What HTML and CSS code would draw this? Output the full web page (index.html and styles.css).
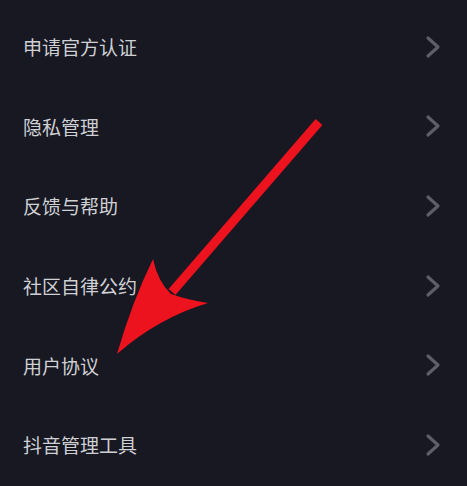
FILE: index.html
```html
<!DOCTYPE html>
<html lang="zh-CN">
<head>
<meta charset="utf-8">
<link rel="stylesheet" href="styles.css">
</head>
<body>
<div class="page">
  <ul class="menu">
    <li class="row"><span class="label">申请官方认证</span><svg class="chev" viewBox="0 0 16 24"><path d="M3 3 L13 12 L3 21"/></svg></li>
    <li class="row"><span class="label">隐私管理</span><svg class="chev" viewBox="0 0 16 24"><path d="M3 3 L13 12 L3 21"/></svg></li>
    <li class="row"><span class="label">反馈与帮助</span><svg class="chev" viewBox="0 0 16 24"><path d="M3 3 L13 12 L3 21"/></svg></li>
    <li class="row"><span class="label">社区自律公约</span><svg class="chev" viewBox="0 0 16 24"><path d="M3 3 L13 12 L3 21"/></svg></li>
    <li class="row"><span class="label">用户协议</span><svg class="chev" viewBox="0 0 16 24"><path d="M3 3 L13 12 L3 21"/></svg></li>
    <li class="row"><span class="label">抖音管理工具</span><svg class="chev" viewBox="0 0 16 24"><path d="M3 3 L13 12 L3 21"/></svg></li>
  </ul>
  <svg class="arrow" viewBox="0 0 467 486" width="467" height="486">
    <line x1="319" y1="122" x2="172" y2="292" stroke="#ec121e" stroke-width="9"/>
    <path d="M117 354 Q132 302 153 259 Q158 282 171 294 Q188 300 208 303 Q158 318 117 354 Z" fill="#ec121e"/>
  </svg>
</div>
</body>
</html>
```
FILE: styles.css
```css
html, body {
  margin: 0;
  padding: 0;
  background: #171822;
}
.page {
  position: relative;
  width: 467px;
  height: 486px;
  overflow: hidden;
  background: #171822;
  font-family: "Noto Sans CJK SC", "Noto Sans", sans-serif;
}
.menu {
  list-style: none;
  margin: 0;
  padding: 7px 0 0 0;
}
.row {
  height: 79.6px;
  display: flex;
  align-items: center;
  justify-content: space-between;
  padding: 0 26px 0 23px;
  box-sizing: border-box;
}
.label {
  color: #cfd0d4;
  font-size: 19px;
  letter-spacing: 0;
}
.chev {
  width: 16px;
  height: 24px;
  fill: none;
  stroke: #5d5e67;
  stroke-width: 3.2;
  stroke-linecap: round;
  stroke-linejoin: round;
}
.arrow {
  position: absolute;
  left: 0;
  top: 0;
}
```
